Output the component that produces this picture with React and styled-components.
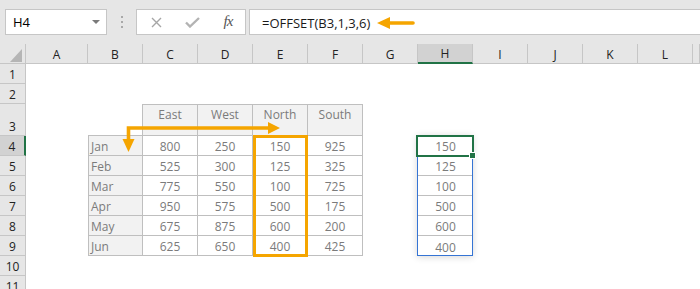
import React from "react"
import styled, { createGlobalStyle } from "styled-components"

const ORANGE = "#f5a500"
const GREEN = "#217346"
const HEAD_LINE = "#c6c6c6"
const CELL_LINE = "#bfbfbf"
const HEAD_BG = "#e6e6e6"

const GlobalStyle = createGlobalStyle`
  body {
    margin: 0;
    background: #fff;
    font-family: "Open Sans", "Liberation Sans", sans-serif;
    overflow: hidden;
  }
`

const columns = ["A", "B", "C", "D", "E", "F", "G", "H", "I", "J", "K", "L", ""]
const rowNumbers = [1, 2, 3, 4, 5, 6, 7, 8, 9, 10, 11]
const regions = ["East", "West", "North", "South"]
const sales = [
  ["Jan", 800, 250, 150, 925],
  ["Feb", 525, 300, 125, 325],
  ["Mar", 775, 550, 100, 725],
  ["Apr", 950, 575, 500, 175],
  ["May", 675, 875, 600, 200],
  ["Jun", 625, 650, 400, 425],
]

const Toolbar = styled.div`
  display: flex;
  align-items: flex-start;
  height: 44px;
  box-sizing: border-box;
  padding: 9px 0 0 5px;
  background: ${HEAD_BG};
`

const NameBox = styled.div`
  display: flex;
  align-items: center;
  justify-content: space-between;
  width: 102px;
  height: 26px;
  box-sizing: border-box;
  padding: 0 6px 0 7px;
  background: #fff;
  border: 1px solid ${HEAD_LINE};
  font-size: 13px;
  color: #000;
`

const Caret = styled.span`
  width: 0;
  height: 0;
  border-left: 4px solid transparent;
  border-right: 4px solid transparent;
  border-top: 4px solid #7a7a7a;
`

const Grip = styled.div`
  display: flex;
  flex-direction: column;
  gap: 3px;
  margin: 7px 0 0 14px;

  span {
    width: 2px;
    height: 2px;
    background: #a8a8a8;
  }
`

const FxBox = styled.div`
  display: grid;
  grid-template-columns: repeat(3, 36px);
  align-items: center;
  justify-items: center;
  width: 110px;
  height: 26px;
  box-sizing: border-box;
  margin-left: 13px;
  padding-left: 1px;
  background: #fff;
  border: 1px solid ${HEAD_LINE};
`

const FxLabel = styled.span`
  font-family: "Liberation Serif", "DejaVu Serif", serif;
  font-style: italic;
  font-size: 15px;
  color: #555;
  letter-spacing: -1px;
  margin-top: -2px;
`

const FormulaInput = styled.div`
  display: flex;
  align-items: center;
  gap: 7px;
  flex: 1;
  height: 26px;
  box-sizing: border-box;
  margin-left: 3px;
  padding: 2px 0 0 12px;
  background: #fff;
  border: 1px solid ${HEAD_LINE};
  border-right: none;
  font-size: 13px;
  color: #1a1a1a;
`

const Sheet = styled.div`
  display: grid;
  grid-template-columns: 26px 62px repeat(11, 55px) 1fr;
  grid-template-rows: 20px 20px 20px 32px repeat(8, 20px);
  font-size: 12px;
  line-height: 16px;
`

const Corner = styled.div`
  grid-column: 1;
  grid-row: 1;
  display: flex;
  align-items: flex-end;
  justify-content: flex-end;
  padding: 0 3px 1px 0;
  background: ${HEAD_BG};
  border-right: 1px solid ${HEAD_LINE};
  border-bottom: 1px solid ${HEAD_LINE};

  &::after {
    content: "";
    width: 0;
    height: 0;
    border-left: 12px solid transparent;
    border-bottom: 13px solid #b5b5b5;
  }
`

const ColHead = styled.div`
  grid-row: 1;
  grid-column: ${p => p.$col};
  display: flex;
  align-items: center;
  justify-content: center;
  padding-top: 2px;
  background: ${p => (p.$active ? "#d2d2d2" : HEAD_BG)};
  border-right: 1px solid ${HEAD_LINE};
  border-bottom: ${p => (p.$active ? `2px solid ${GREEN}` : `1px solid ${HEAD_LINE}`)};
  color: #222;
`

const RowHead = styled.div`
  grid-column: 1;
  grid-row: ${p => p.$row};
  display: flex;
  align-items: flex-end;
  justify-content: center;
  background: ${p => (p.$active ? "#d2d2d2" : HEAD_BG)};
  border-right: ${p => (p.$active ? `2px solid ${GREEN}` : `1px solid ${HEAD_LINE}`)};
  border-bottom: 1px solid ${HEAD_LINE};
  color: #222;
`

const Cell = styled.div`
  grid-column: ${p => p.$col};
  grid-row: ${p => p.$row};
  display: flex;
  align-items: ${p => (p.$head ? "flex-start" : "flex-end")};
  justify-content: ${p => (p.$label ? "flex-start" : "center")};
  padding: ${p => (p.$head ? "2px 0 0" : p.$label ? "0 0 0 2px" : "0")};
  background: ${p => (p.$head || p.$label ? "#f2f2f2" : "#fff")};
  border-right: 1px solid ${CELL_LINE};
  border-bottom: 1px solid ${CELL_LINE};
  border-top: ${p => (p.$head ? `1px solid ${CELL_LINE}` : "none")};
  border-left: ${p => (p.$label ? `1px solid ${CELL_LINE}` : "none")};
  color: #7b7b7b;
`

const BlankCorner = styled.div`
  grid-column: 3;
  grid-row: 4;
  border-right: 1px solid ${CELL_LINE};
  border-bottom: 1px solid ${CELL_LINE};
`

const ResultCell = styled.div`
  grid-column: 9;
  grid-row: ${p => p.$row};
  display: flex;
  align-items: flex-end;
  justify-content: center;
  border-bottom: ${p => (p.$last ? "none" : `1px solid ${CELL_LINE}`)};
  color: #7b7b7b;
`

const RangeBox = styled.div`
  grid-column: 9;
  grid-row: 5 / 11;
  margin: -1px 0 0 -1px;
  border: 1px solid #3574d4;
  box-shadow: 0 1px 7px rgba(0, 0, 0, 0.16);
  pointer-events: none;
  z-index: 2;
`

const ActiveCell = styled.div`
  position: relative;
  grid-column: 9;
  grid-row: 5;
  margin: -1px -1px -1px -2px;
  border: 2px solid ${GREEN};
  pointer-events: none;
  z-index: 3;

  &::after {
    content: "";
    position: absolute;
    right: -4px;
    bottom: -4px;
    width: 5px;
    height: 5px;
    background: ${GREEN};
    border: 1px solid #fff;
  }
`

const Highlight = styled.div`
  grid-column: 6;
  grid-row: 5 / 11;
  margin: -1px 0 -1px 0;
  border: 3px solid ${ORANGE};
  pointer-events: none;
  z-index: 2;
`

const ArrowLayer = styled.svg`
  grid-column: 3 / 7;
  grid-row: 4 / 6;
  width: 100%;
  height: 100%;
  overflow: visible;
  pointer-events: none;
  z-index: 3;
`

const CrossIcon = () => (
  <svg width="11" height="11" viewBox="0 0 11 11">
    <path d="M1 1L10 10M10 1L1 10" stroke="#a6a6a6" strokeWidth="1.4" fill="none" />
  </svg>
)

const CheckIcon = () => (
  <svg width="15" height="11" viewBox="0 0 15 11">
    <path d="M1 5.5L5 9.5L14 1" stroke="#b3b3b3" strokeWidth="2.4" fill="none" />
  </svg>
)

const BackArrow = () => (
  <svg width="38" height="12" viewBox="0 0 38 12">
    <path d="M12 6H36" stroke={ORANGE} strokeWidth="3.6" strokeLinecap="round" />
    <path d="M0 6L13 0V12Z" fill={ORANGE} />
  </svg>
)

const App = () => (
  <>
    <GlobalStyle />
    <Toolbar>
      <NameBox>
        H4
        <Caret />
      </NameBox>
      <Grip>
        <span />
        <span />
        <span />
      </Grip>
      <FxBox>
        <CrossIcon />
        <CheckIcon />
        <FxLabel>fx</FxLabel>
      </FxBox>
      <FormulaInput>
        =OFFSET(B3,1,3,6)
        <BackArrow />
      </FormulaInput>
    </Toolbar>

    <Sheet>
      <Corner />
      {columns.map((c, i) => (
        <ColHead key={i} $col={i + 2} $active={c === "H"}>
          {c}
        </ColHead>
      ))}
      {rowNumbers.map(n => (
        <RowHead key={n} $row={n + 1} $active={n === 4}>
          {n}
        </RowHead>
      ))}

      <BlankCorner />
      {regions.map((r, i) => (
        <Cell key={r} $head $col={i + 4} $row={4}>
          {r}
        </Cell>
      ))}
      {sales.map((row, r) =>
        row.map((v, c) => (
          <Cell key={`${r}-${c}`} $label={c === 0} $col={c + 3} $row={r + 5}>
            {v}
          </Cell>
        ))
      )}

      {sales.map((row, r) => (
        <ResultCell key={r} $row={r + 5} $last={r === sales.length - 1}>
          {row[3]}
        </ResultCell>
      ))}

      <Highlight />
      <RangeBox />
      <ActiveCell />

      <ArrowLayer viewBox="0 0 220 52" preserveAspectRatio="none">
        <path d="M181 24H40.5V36" stroke={ORANGE} strokeWidth="3.6" fill="none" />
        <path d="M180 18L192 24L180 30Z" fill={ORANGE} />
        <path d="M34.5 35H46.5L40.5 48Z" fill={ORANGE} />
      </ArrowLayer>
    </Sheet>
  </>
)

export default App
